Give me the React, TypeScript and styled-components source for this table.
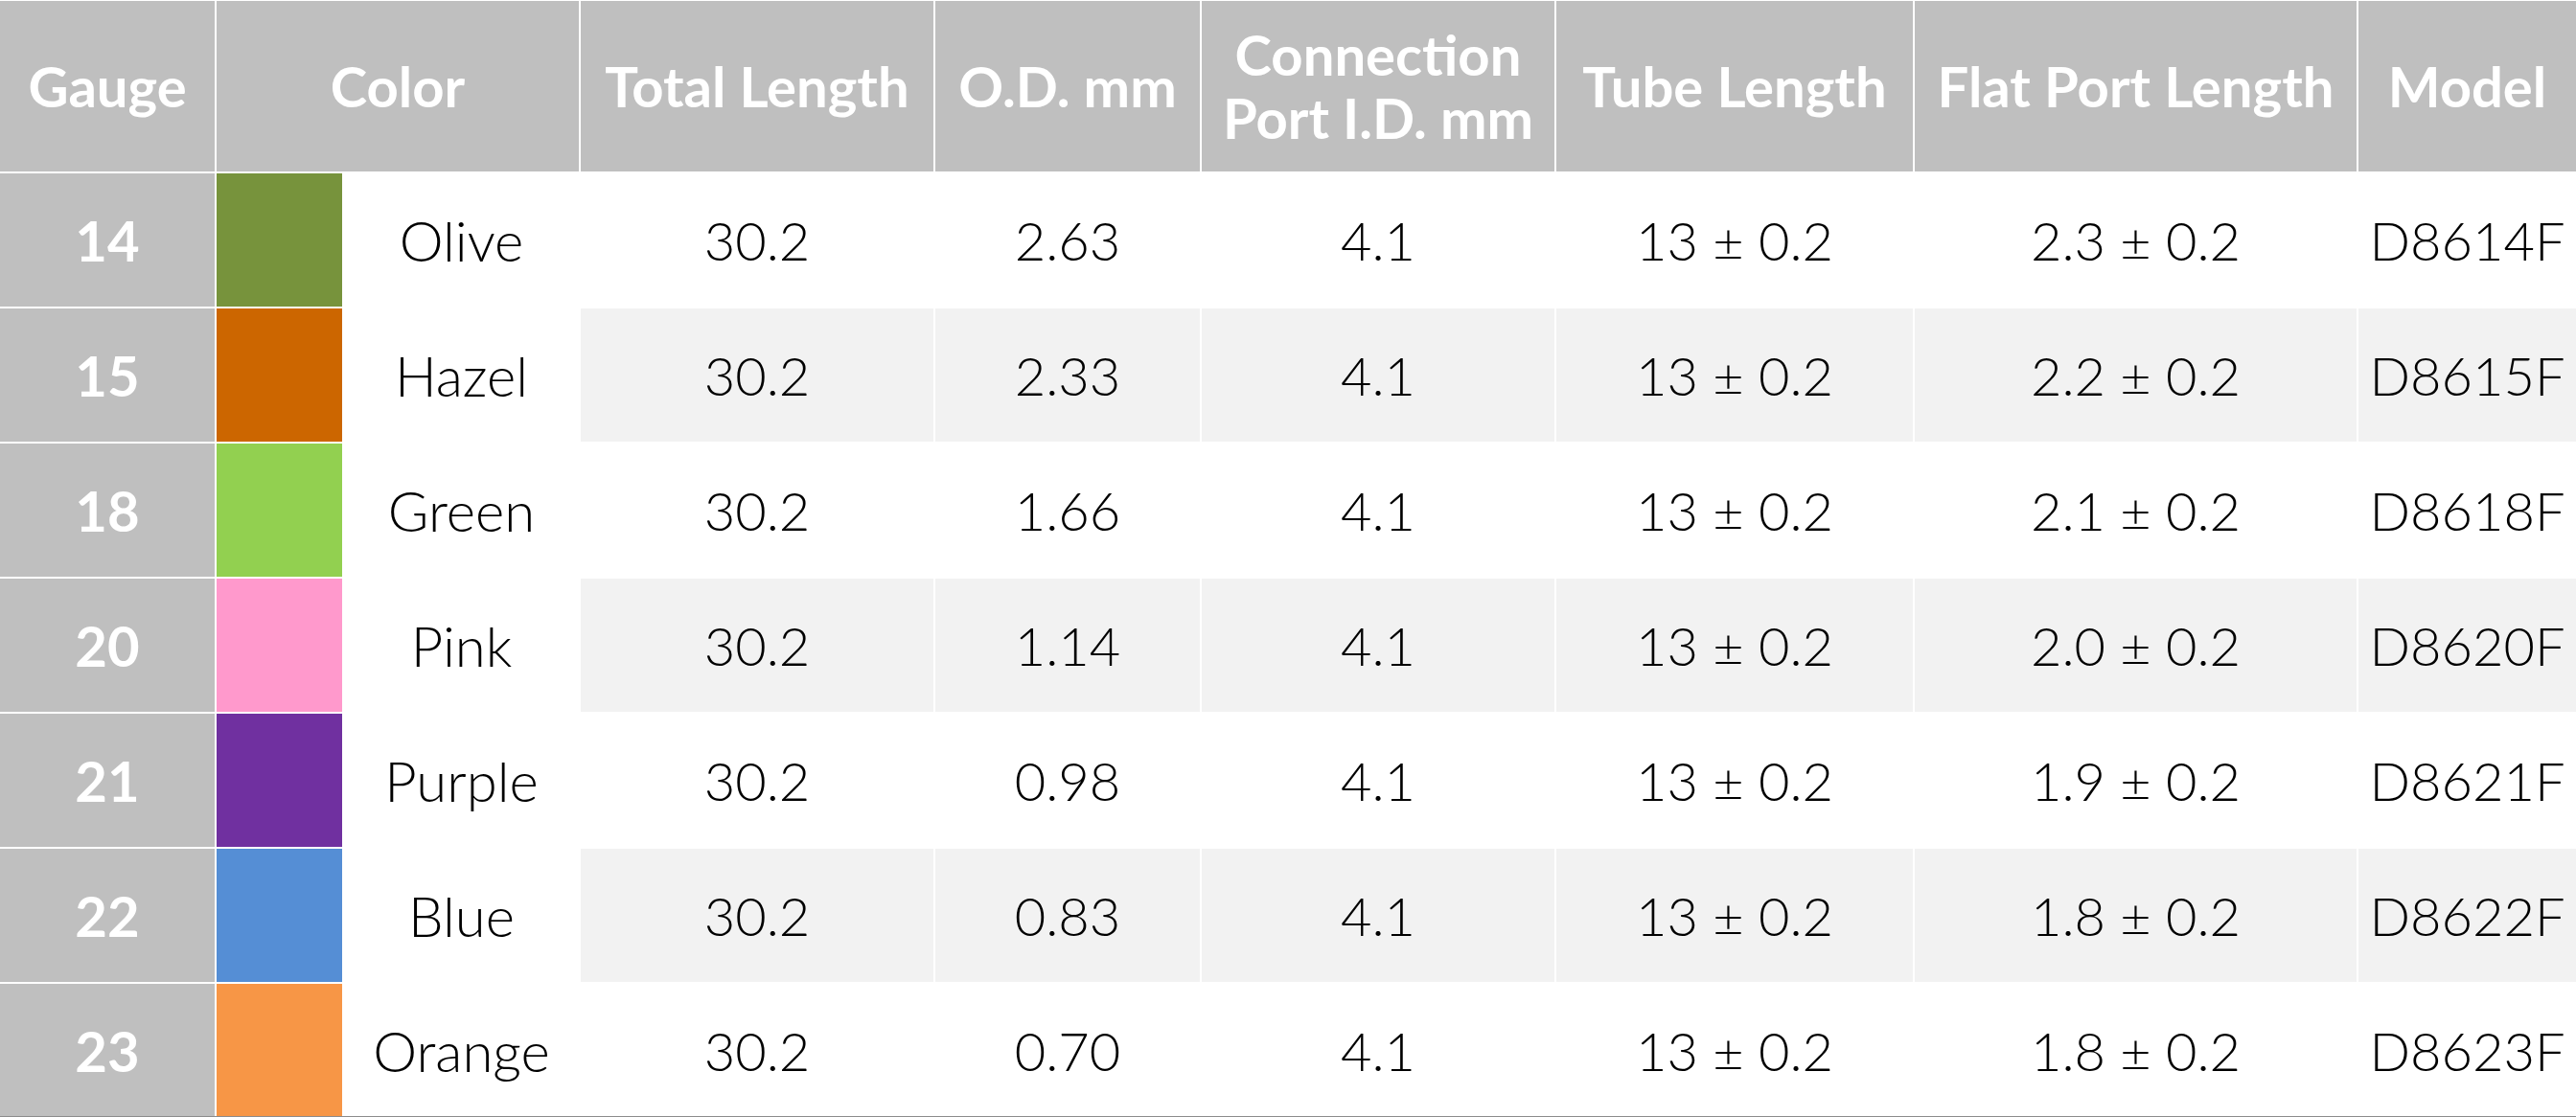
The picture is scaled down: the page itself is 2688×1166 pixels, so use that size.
import React from 'react';
import styled, { createGlobalStyle } from 'styled-components';

const GlobalStyle = createGlobalStyle`
	html,
	body {
		margin: 0;
		padding: 0;
		background: #ffffff;
	}
	body {
		font-family: Lato, 'Open Sans', sans-serif;
	}
`;

const headers = [
	{ label: 'Gauge', span: 1 },
	{ label: 'Color', span: 2 },
	{ label: 'Total Length', span: 1 },
	{ label: 'O.D. mm', span: 1 },
	{ label: 'Connection\nPort I.D. mm', span: 1 },
	{ label: 'Tube Length', span: 1 },
	{ label: 'Flat Port Length', span: 1 },
	{ label: 'Model', span: 1 },
];

const rows = [
	{ gauge: '14', name: 'Olive', swatch: '#77933c', od: '2.63', flat: '2.3', model: 'D8614F' },
	{ gauge: '15', name: 'Hazel', swatch: '#cc6600', od: '2.33', flat: '2.2', model: 'D8615F' },
	{ gauge: '18', name: 'Green', swatch: '#92d050', od: '1.66', flat: '2.1', model: 'D8618F' },
	{ gauge: '20', name: 'Pink', swatch: '#ff99cc', od: '1.14', flat: '2.0', model: 'D8620F' },
	{ gauge: '21', name: 'Purple', swatch: '#7030a0', od: '0.98', flat: '1.9', model: 'D8621F' },
	{ gauge: '22', name: 'Blue', swatch: '#558ed5', od: '0.83', flat: '1.8', model: 'D8622F' },
	{ gauge: '23', name: 'Orange', swatch: '#f79646', od: '0.70', flat: '1.8', model: 'D8623F' },
];

const App = () => {
	return (
		<>
			<GlobalStyle />
			<Table>
				{headers.map(h => (
					<HeaderCell key={h.label} $span={h.span}>
						{h.label}
					</HeaderCell>
				))}
				{rows.map((r, i) => {
					const striped = i % 2 === 1;
					return (
						<React.Fragment key={r.gauge}>
							<GaugeCell>{r.gauge}</GaugeCell>
							<Swatch $color={r.swatch} />
							<NameCell>{r.name}</NameCell>
							<ValueCell $striped={striped}>30.2</ValueCell>
							<ValueCell $striped={striped}>{r.od}</ValueCell>
							<ValueCell $striped={striped}>4.1</ValueCell>
							<ValueCell $striped={striped}>13 ± 0.2</ValueCell>
							<ValueCell $striped={striped}>{r.flat} ± 0.2</ValueCell>
							<ValueCell $striped={striped}>{r.model}</ValueCell>
						</React.Fragment>
					);
				})}
			</Table>
		</>
	);
};

const Table = styled.div`
	position: relative;
	display: grid;
	grid-template-columns: 224px 131px 245px 368px 276px 368px 372px 461px 227px;
	grid-template-rows: 178px repeat(7, 139px);
	gap: 2px;
	padding-top: 1px;
	width: 2688px;
	height: 1166px;
	box-sizing: border-box;
	background: #ffffff;
	overflow: hidden;

	&::after {
		content: '';
		position: absolute;
		left: 0;
		right: 0;
		bottom: 0;
		height: 1px;
		background: #8c8c8c;
	}
`;

const Cell = styled.div`
	display: flex;
	align-items: center;
	justify-content: center;
	text-align: center;
	font-size: 56px;
	line-height: 64px;
	white-space: pre-line;
`;

const HeaderCell = styled(Cell)<{ $span: number }>`
	grid-column: span ${p => p.$span};
	background: #bfbfbf;
	color: #ffffff;
	font-size: 58px;
	line-height: 66px;
	font-weight: 700;
`;

const GaugeCell = styled(Cell)`
	background: #bfbfbf;
	color: #ffffff;
	font-size: 58px;
	font-weight: 700;
`;

const Swatch = styled.div<{ $color: string }>`
	background: ${p => p.$color};
`;

const NameCell = styled(Cell)`
	background: #ffffff;
	color: #000000;
	font-size: 58px;
	font-weight: 300;
`;

const ValueCell = styled(Cell)<{ $striped: boolean }>`
	background: ${p => (p.$striped ? '#f2f2f2' : '#ffffff')};
	color: #000000;
	font-weight: 300;
`;

export default App;
